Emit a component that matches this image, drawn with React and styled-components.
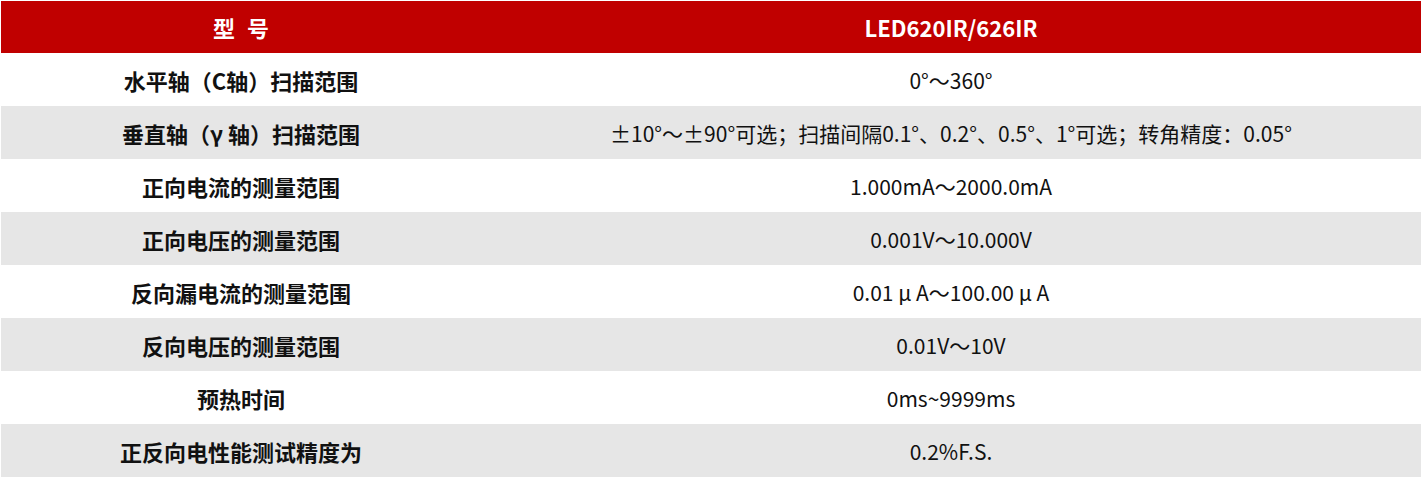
import styled, { createGlobalStyle } from 'styled-components';

const GlobalStyle = createGlobalStyle`
  html, body {
    margin: 0;
    padding: 0;
    background: #ffffff;
  }
  body {
    font-family: "Noto Sans CJK SC", "Noto Sans", sans-serif;
  }
`;

const Table = styled.div`
  width: 1420px;
  margin: 1px 0 0 1px;
  display: grid;
  grid-template-columns: 480px 1fr;
`;

const Cell = styled.div`
  height: ${(p) => (p.$head ? '52px' : '53px')};
  display: flex;
  align-items: center;
  justify-content: center;
  background: ${(p) => (p.$head ? '#c00000' : p.$shade ? '#e6e6e6' : '#ffffff')};
  color: ${(p) => (p.$head ? '#ffffff' : '#111111')};
  font-size: ${(p) => (p.$bold ? '22px' : '21px')};
  font-weight: ${(p) => (p.$bold ? 700 : 400)};
  letter-spacing: ${(p) => (p.$spaced ? '12px' : '0')};
  padding-left: ${(p) => (p.$spaced ? '12px' : '0')};
  white-space: nowrap;
`;

const rows = [
  ['水平轴（C轴）扫描范围', '0°～360°'],
  ['垂直轴（γ 轴）扫描范围', '±10°～±90°可选；扫描间隔0.1°、0.2°、0.5°、1°可选；转角精度：0.05°'],
  ['正向电流的测量范围', '1.000mA～2000.0mA'],
  ['正向电压的测量范围', '0.001V～10.000V'],
  ['反向漏电流的测量范围', '0.01 μ A～100.00 μ A'],
  ['反向电压的测量范围', '0.01V～10V'],
  ['预热时间', '0ms~9999ms'],
  ['正反向电性能测试精度为', '0.2%F.S.'],
];

export default function App() {
  return (
    <>
      <GlobalStyle />
      <Table>
        <Cell $head $bold $spaced>型号</Cell>
        <Cell $head $bold>LED620IR/626IR</Cell>
        {rows.map(([label, value], i) => (
          <>
            <Cell key={`l${i}`} $bold $shade={i % 2 === 1}>{label}</Cell>
            <Cell key={`v${i}`} $shade={i % 2 === 1}>{value}</Cell>
          </>
        ))}
      </Table>
    </>
  );
}
